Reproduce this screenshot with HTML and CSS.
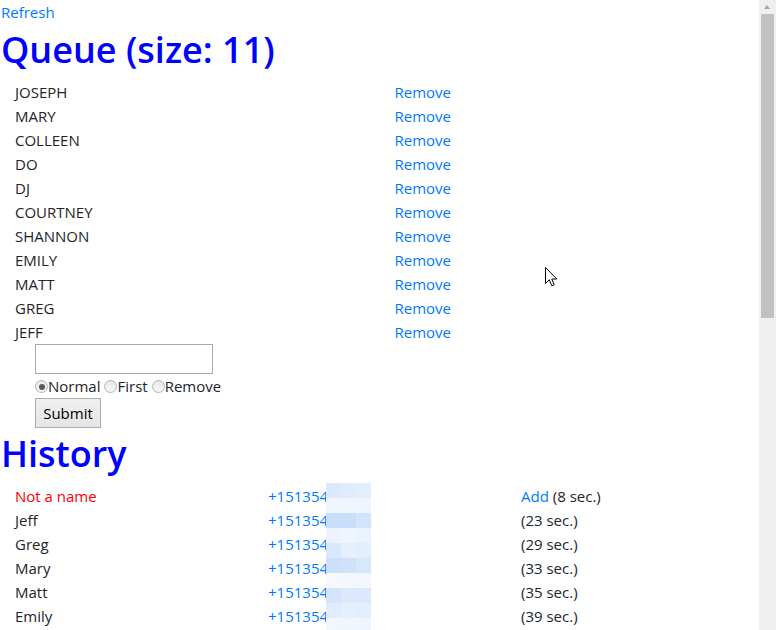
FILE: index.html
```html
<!DOCTYPE html>
<html>
<head>
<meta charset="utf-8">
<title>Queue</title>
<link rel="stylesheet" href="styles.css">
</head>
<body>
<div class="page">
  <a class="link" href="#">Refresh</a>
  <h1 class="title">Queue (size: 11)</h1>
  <div class="queue">
    <div class="row"><div class="col">JOSEPH</div><div class="col"><a class="link" href="#">Remove</a></div></div>
    <div class="row"><div class="col">MARY</div><div class="col"><a class="link" href="#">Remove</a></div></div>
    <div class="row"><div class="col">COLLEEN</div><div class="col"><a class="link" href="#">Remove</a></div></div>
    <div class="row"><div class="col">DO</div><div class="col"><a class="link" href="#">Remove</a></div></div>
    <div class="row"><div class="col">DJ</div><div class="col"><a class="link" href="#">Remove</a></div></div>
    <div class="row"><div class="col">COURTNEY</div><div class="col"><a class="link" href="#">Remove</a></div></div>
    <div class="row"><div class="col">SHANNON</div><div class="col"><a class="link" href="#">Remove</a></div></div>
    <div class="row"><div class="col">EMILY</div><div class="col"><a class="link" href="#">Remove</a></div></div>
    <div class="row"><div class="col">MATT</div><div class="col"><a class="link" href="#">Remove</a></div></div>
    <div class="row"><div class="col">GREG</div><div class="col"><a class="link" href="#">Remove</a></div></div>
    <div class="row"><div class="col">JEFF</div><div class="col"><a class="link" href="#">Remove</a></div></div>
  </div>
  <form class="add-form">
    <input class="name-input" type="text">
    <div class="radios">
      <label class="radio-label"><input class="radio" type="radio" name="mode" checked>Normal</label>
      <label class="radio-label"><input class="radio" type="radio" name="mode">First</label>
      <label class="radio-label"><input class="radio" type="radio" name="mode">Remove</label>
    </div>
    <button class="submit" type="button">Submit</button>
  </form>
  <h1 class="title">History</h1>
  <div class="history">
    <div class="row3"><div class="col3 bad">Not a name</div><div class="col3"><a class="link" href="#">+151354</a></div><div class="col3"><a class="link" href="#">Add</a> (8 sec.)</div></div>
    <div class="row3"><div class="col3">Jeff</div><div class="col3"><a class="link" href="#">+151354</a></div><div class="col3">(23 sec.)</div></div>
    <div class="row3"><div class="col3">Greg</div><div class="col3"><a class="link" href="#">+151354</a></div><div class="col3">(29 sec.)</div></div>
    <div class="row3"><div class="col3">Mary</div><div class="col3"><a class="link" href="#">+151354</a></div><div class="col3">(33 sec.)</div></div>
    <div class="row3"><div class="col3">Matt</div><div class="col3"><a class="link" href="#">+151354</a></div><div class="col3">(35 sec.)</div></div>
    <div class="row3"><div class="col3">Emily</div><div class="col3"><a class="link" href="#">+151354</a></div><div class="col3">(39 sec.)</div></div>
    <div class="pixelate">
      <i></i><i></i><i></i><i></i><i></i><i></i><i></i><i></i><i></i><i></i>
      <i></i><i></i><i></i><i></i><i></i><i></i><i></i><i></i><i></i><i></i>
      <i></i><i></i><i></i><i></i><i></i><i></i><i></i><i></i><i></i><i></i>
    </div>
  </div>
</div>
<div class="scrollbar">
  <div class="scroll-arrow"></div>
  <div class="scroll-thumb"></div>
</div>
<svg class="cursor" width="13" height="20" viewBox="0 0 13 20"><path d="M0.5 0.5 L0.5 16.5 L4.3 12.9 L6.8 18.8 L9.2 17.8 L6.8 12 L11.8 12 Z" fill="#fff" stroke="#000" stroke-width="1" stroke-linejoin="miter"/></svg>
</body>
</html>
```

FILE: styles.css
```css
html, body {
  margin: 0;
  padding: 0;
  overflow: hidden;
  background: #fff;
}
body {
  width: 776px;
  height: 630px;
  position: relative;
  font-family: "Open Sans", "Noto Sans", sans-serif;
  font-size: 15px;
  line-height: 24px;
  color: #212529;
}
.page {
  width: 759px;
}
.link {
  color: #007bff;
  text-decoration: none;
}
.page > .link {
  display: block;
  padding-left: 1px;
}
.title {
  margin: 0 0 8px 0;
  font-size: 36px;
  line-height: 48px;
  font-weight: 600;
  color: #0000ff;
  padding-left: 1px;
  padding-top: 2px;
  height: 46px;
}
.row {
  display: grid;
  grid-template-columns: 1fr 1fr;
  height: 24px;
}
.col, .col3 {
  padding-left: 15px;
  white-space: nowrap;
}
.add-form {
  margin-left: 35px;
  display: flex;
  flex-direction: column;
  align-items: flex-start;
}
.name-input {
  box-sizing: border-box;
  width: 178px;
  height: 30px;
  margin: 0;
  border: 1px solid #a9a9a9;
  padding: 2px 4px;
  font: inherit;
}
.radios {
  height: 24px;
  display: flex;
  align-items: center;
  gap: 4px;
  white-space: nowrap;
}
.radio-label {
  display: flex;
  align-items: center;
}
.radio {
  -webkit-appearance: none;
  appearance: none;
  box-sizing: border-box;
  width: 13px;
  height: 13px;
  margin: 1px 0 0 0;
  border: 1px solid #b5b5b5;
  border-radius: 50%;
  background: linear-gradient(#e8e8e8, #f6f6f6);
  position: relative;
}
.radio:checked::after {
  content: "";
  position: absolute;
  left: 2.5px;
  top: 2.5px;
  width: 6px;
  height: 6px;
  border-radius: 50%;
  background: #5a5a5a;
}
.submit {
  box-sizing: border-box;
  width: 66px;
  height: 30px;
  margin: 0;
  padding: 0;
  border: 1px solid #adadad;
  border-radius: 0;
  background: linear-gradient(#f0f0f0, #e5e5e5);
  font: inherit;
  color: #000;
}
.history {
  position: relative;
}
.row3 {
  display: grid;
  grid-template-columns: 1fr 1fr 1fr;
  height: 24px;
}
.bad {
  color: #ff0000;
}
.pixelate {
  position: absolute;
  left: 326px;
  top: -1px;
  display: grid;
  grid-template-columns: repeat(3, 15px);
  grid-template-rows: repeat(10, 15px);
  grid-auto-flow: column;
}
.pixelate i { display: block; }
/* column 1 */
.pixelate i:nth-child(1) { background: #dce9fd; }
.pixelate i:nth-child(2) { background: #f0f6fe; }
.pixelate i:nth-child(3) { background: #c9defb; }
.pixelate i:nth-child(4) { background: #ecf3fe; }
.pixelate i:nth-child(5) { background: #d9e8fc; }
.pixelate i:nth-child(6) { background: #cce0fb; }
.pixelate i:nth-child(7) { background: #f5f9fe; }
.pixelate i:nth-child(8) { background: #d3e5fc; }
.pixelate i:nth-child(9) { background: #e0ecfd; }
.pixelate i:nth-child(10) { background: #f2f7fe; }
/* column 2 */
.pixelate i:nth-child(11) { background: #e0ecfd; }
.pixelate i:nth-child(12) { background: #f1f6fe; }
.pixelate i:nth-child(13) { background: #c9defb; }
.pixelate i:nth-child(14) { background: #eef5fe; }
.pixelate i:nth-child(15) { background: #e6effd; }
.pixelate i:nth-child(16) { background: #cfe2fb; }
.pixelate i:nth-child(17) { background: #f3f8fe; }
.pixelate i:nth-child(18) { background: #dce9fd; }
.pixelate i:nth-child(19) { background: #e6f0fd; }
.pixelate i:nth-child(20) { background: #f1f6fe; }
/* column 3 */
.pixelate i:nth-child(21) { background: #e2edfd; }
.pixelate i:nth-child(22) { background: #eef5fe; }
.pixelate i:nth-child(23) { background: #d3e5fc; }
.pixelate i:nth-child(24) { background: #eaf2fe; }
.pixelate i:nth-child(25) { background: #e3eefd; }
.pixelate i:nth-child(26) { background: #d8e7fc; }
.pixelate i:nth-child(27) { background: #f2f7fe; }
.pixelate i:nth-child(28) { background: #dbe8fd; }
.pixelate i:nth-child(29) { background: #e3eefd; }
.pixelate i:nth-child(30) { background: #eef5fe; }
.scrollbar {
  position: absolute;
  top: 0;
  left: 759px;
  width: 17px;
  height: 630px;
  background: #f0f0f0;
}
.scroll-arrow {
  position: absolute;
  left: 5px;
  top: 5px;
  width: 0;
  height: 0;
  border-left: 3.5px solid transparent;
  border-right: 3.5px solid transparent;
  border-bottom: 4px solid #a3a3a3;
}
.scroll-thumb {
  position: absolute;
  left: 2px;
  top: 14px;
  width: 13px;
  height: 304px;
  background: #c1c1c1;
}
.cursor {
  position: absolute;
  left: 545px;
  top: 267px;
}
```
